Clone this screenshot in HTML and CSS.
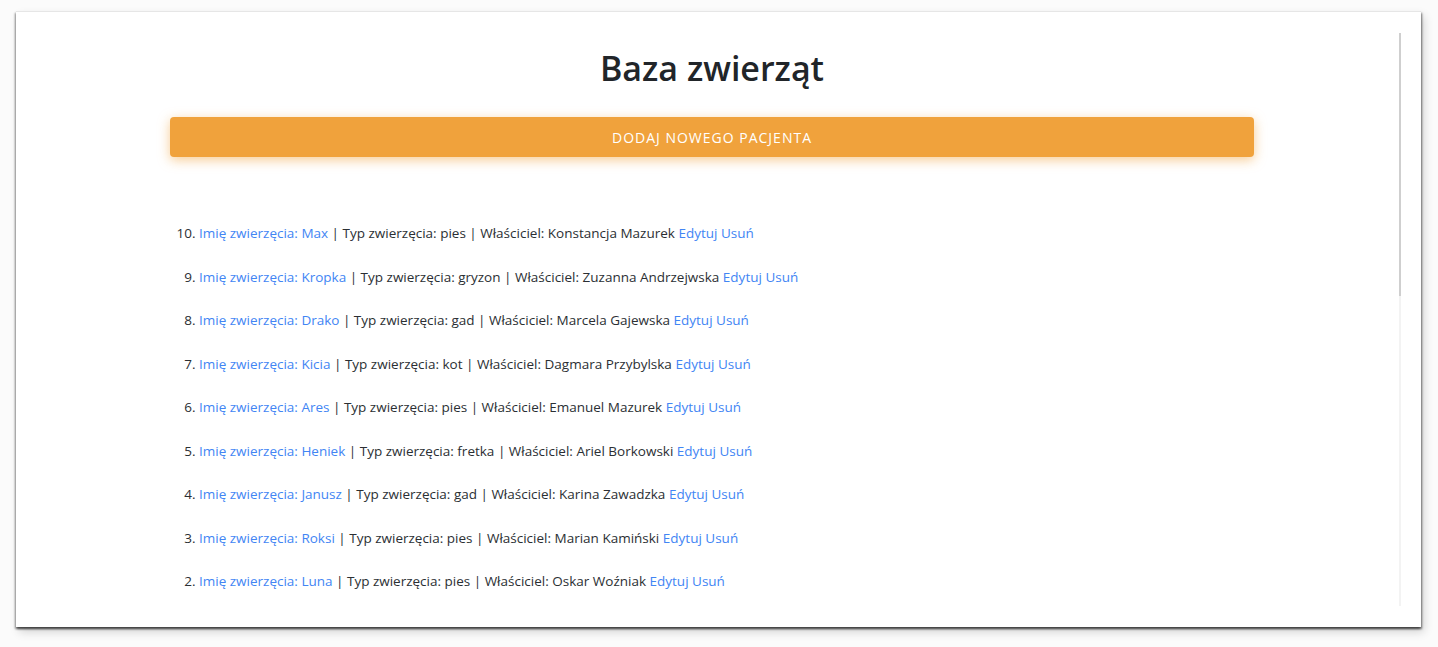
FILE: index.html
```html
<!DOCTYPE html>
<html lang="pl">
<head>
<meta charset="utf-8">
<title>Baza zwierząt</title>
<link rel="stylesheet" href="styles.css">
</head>
<body>
<div class="window">
  <div class="content">
    <h1 class="title">Baza zwierząt</h1>
    <button class="add-btn">Dodaj nowego pacjenta</button>
    <ol class="list" reversed start="10">
      <li><a href="#">Imię zwierzęcia: Max</a> | Typ zwierzęcia: pies | Właściciel: Konstancja Mazurek <a href="#">Edytuj</a> <a href="#">Usuń</a></li>
      <li><a href="#">Imię zwierzęcia: Kropka</a> | Typ zwierzęcia: gryzon | Właściciel: Zuzanna Andrzejwska <a href="#">Edytuj</a> <a href="#">Usuń</a></li>
      <li><a href="#">Imię zwierzęcia: Drako</a> | Typ zwierzęcia: gad | Właściciel: Marcela Gajewska <a href="#">Edytuj</a> <a href="#">Usuń</a></li>
      <li><a href="#">Imię zwierzęcia: Kicia</a> | Typ zwierzęcia: kot | Właściciel: Dagmara Przybylska <a href="#">Edytuj</a> <a href="#">Usuń</a></li>
      <li><a href="#">Imię zwierzęcia: Ares</a> | Typ zwierzęcia: pies | Właściciel: Emanuel Mazurek <a href="#">Edytuj</a> <a href="#">Usuń</a></li>
      <li><a href="#">Imię zwierzęcia: Heniek</a> | Typ zwierzęcia: fretka | Właściciel: Ariel Borkowski <a href="#">Edytuj</a> <a href="#">Usuń</a></li>
      <li><a href="#">Imię zwierzęcia: Janusz</a> | Typ zwierzęcia: gad | Właściciel: Karina Zawadzka <a href="#">Edytuj</a> <a href="#">Usuń</a></li>
      <li><a href="#">Imię zwierzęcia: Roksi</a> | Typ zwierzęcia: pies | Właściciel: Marian Kamiński <a href="#">Edytuj</a> <a href="#">Usuń</a></li>
      <li><a href="#">Imię zwierzęcia: Luna</a> | Typ zwierzęcia: pies | Właściciel: Oskar Woźniak <a href="#">Edytuj</a> <a href="#">Usuń</a></li>
    </ol>
  </div>
  <div class="scrollbar"><div class="thumb"></div></div>
</div>
</body>
</html>
```

FILE: styles.css
```css
html, body {
  margin: 0;
  padding: 0;
  background: #fbfbfb;
}
body {
  padding: 11px 17px 21px 16px;
  font-family: "Open Sans", "Noto Sans", sans-serif;
  color: #212529;
}
.window {
  position: relative;
  height: 615px;
  background: #ffffff;
  border-top: 1px solid #e6e6e6;
  box-shadow: 1px 2px 2px rgba(0, 0, 0, 0.5), -1px 2px 2px rgba(0, 0, 0, 0.4), 3px 5px 9px rgba(0, 0, 0, 0.16);
  overflow: hidden;
}
.content {
  width: 1084px;
  margin-left: 154px;
  display: flex;
  flex-direction: column;
}
.title {
  margin: 34px 0 0;
  text-align: center;
  font-size: 34px;
  font-weight: 600;
  line-height: 44px;
  color: #212529;
}
.add-btn {
  margin-top: 27px;
  height: 40px;
  border: none;
  border-radius: 4px;
  background: #f0a23c;
  color: #ffffff;
  font-family: inherit;
  font-size: 14px;
  letter-spacing: 1px;
  text-transform: uppercase;
  box-shadow: 0 3px 12px rgba(240, 162, 60, 0.55);
  cursor: pointer;
}
.list {
  margin: 64px 0 0;
  padding-left: 29px;
  font-size: 13.5px;
  line-height: 24px;
  color: #2b2f33;
}
.list li {
  margin-bottom: 19.5px;
}
.list a {
  color: #4285f4;
  text-decoration: none;
}
.scrollbar {
  position: absolute;
  left: 1383px;
  top: 21px;
  width: 2px;
  height: 573px;
  background: #f3f3f3;
}
.thumb {
  height: 263px;
  background: #cfcfcf;
}
```
